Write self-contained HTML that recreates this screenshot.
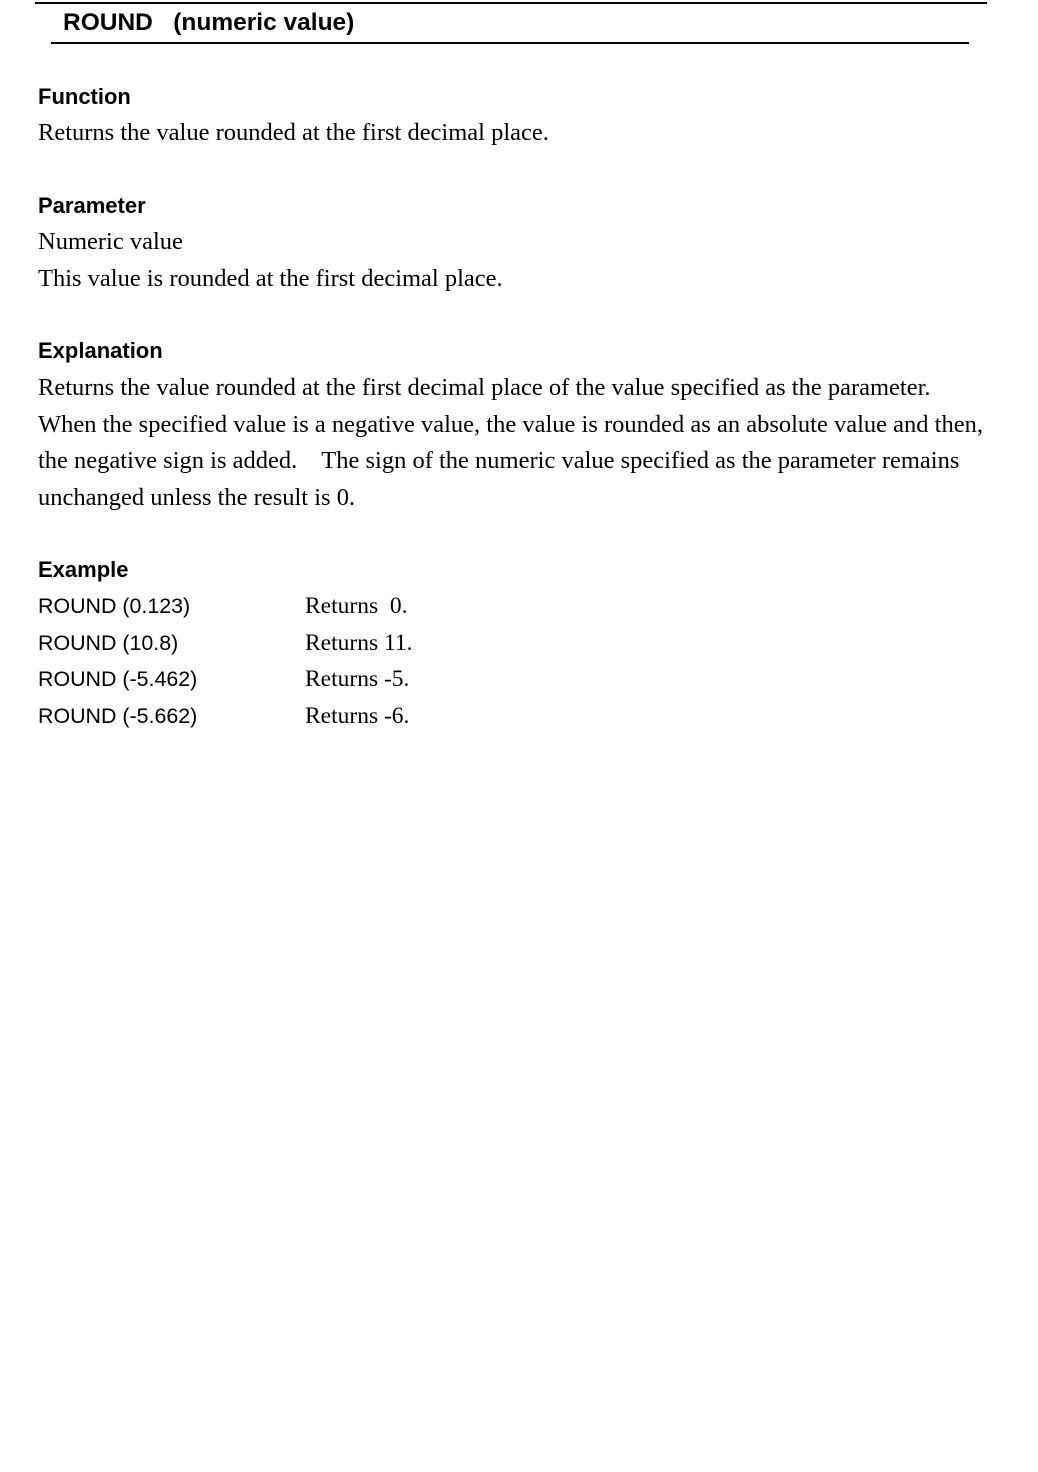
<!DOCTYPE html>
<html><head><meta charset="utf-8"><style>
body{margin:0;width:1038px;height:1472px;background:#fff;position:relative;overflow:hidden;color:#000}
.a{position:absolute;white-space:nowrap;line-height:24px;height:24px}
.s{font-family:"Liberation Serif",serif;font-size:24.5px}
.h{font-family:"Liberation Sans",sans-serif;font-size:22px;font-weight:bold}
.m{font-family:"Liberation Sans",sans-serif;font-size:21.4px}
.r{font-size:23.5px}
.l{position:absolute;height:1.5px;background:#000}
</style></head><body>
<div class="l" style="left:35px;top:2px;width:952px"></div>
<div class="l" style="left:51px;top:42px;width:918px"></div>
<div class="a h" style="left:63px;top:11px;font-size:24.5px">ROUND&nbsp;&nbsp;&nbsp;(numeric value)</div>

<div class="a h" style="left:38px;top:85px">Function</div>
<div class="a s" style="left:38px;top:121px">Returns the value rounded at the first decimal place.</div>

<div class="a h" style="left:38px;top:194px">Parameter</div>
<div class="a s" style="left:38px;top:230px">Numeric value</div>
<div class="a s" style="left:38px;top:267px">This value is rounded at the first decimal place.</div>

<div class="a h" style="left:38px;top:339px">Explanation</div>
<div class="a s" style="left:38px;top:376px">Returns the value rounded at the first decimal place of the value specified as the parameter.</div>
<div class="a s" style="left:38px;top:413px">When the specified value is a negative value, the value is rounded as an absolute value and then,</div>
<div class="a s" style="left:38px;top:449px">the negative sign is added.&nbsp;&nbsp;&nbsp; The sign of the numeric value specified as the parameter remains</div>
<div class="a s" style="left:38px;top:486px">unchanged unless the result is 0.</div>

<div class="a h" style="left:38px;top:558px">Example</div>
<div class="a m" style="left:38px;top:594px">ROUND (0.123)</div>
<div class="a s r" style="left:305px;top:594px">Returns&nbsp; 0.</div>
<div class="a m" style="left:38px;top:631px">ROUND (10.8)</div>
<div class="a s r" style="left:305px;top:631px">Returns 11.</div>
<div class="a m" style="left:38px;top:667px">ROUND (-5.462)</div>
<div class="a s r" style="left:305px;top:667px">Returns -5.</div>
<div class="a m" style="left:38px;top:704px">ROUND (-5.662)</div>
<div class="a s r" style="left:305px;top:704px">Returns -6.</div>
</body></html>
